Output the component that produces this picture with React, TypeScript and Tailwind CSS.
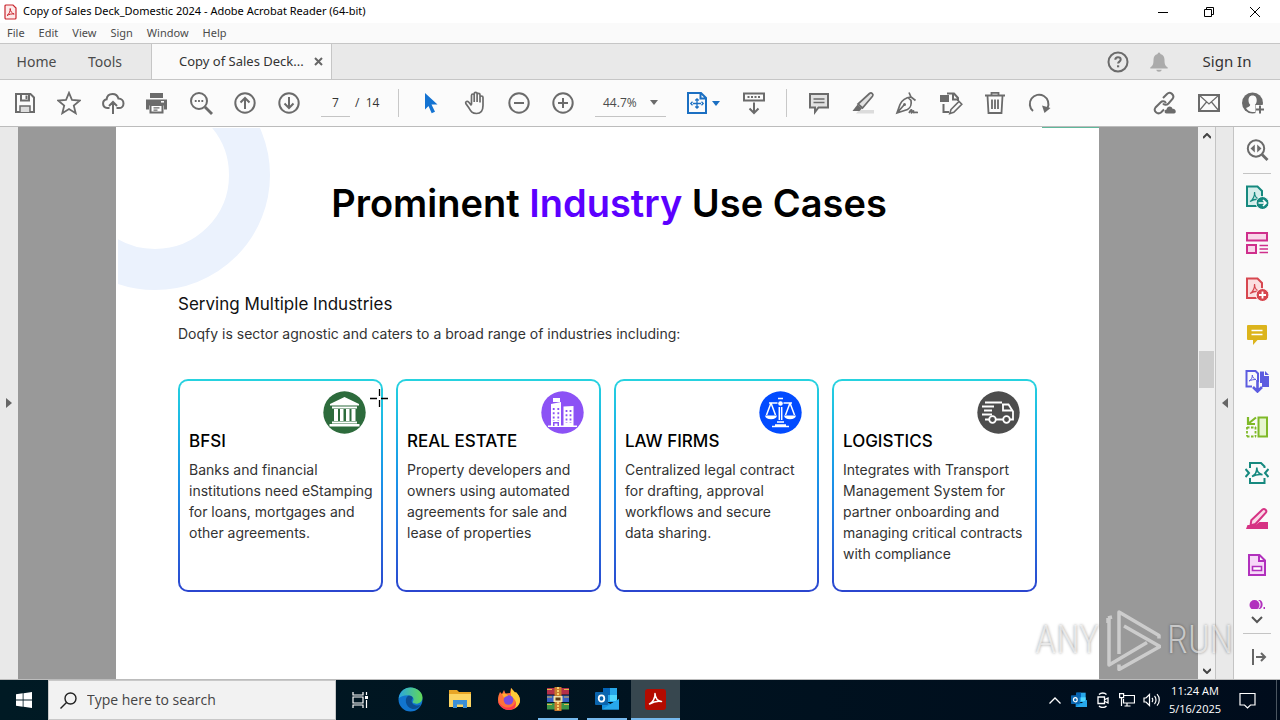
import React from 'react';

type IconProps = { children: React.ReactNode; size?: number; className?: string; sw?: number };

const Icon = ({ children, size = 24, className = 'text-[#6b6b6b]', sw = 2 }: IconProps) => (
  <svg
    width={size}
    height={size}
    viewBox="0 0 24 24"
    fill="none"
    stroke="currentColor"
    strokeWidth={sw}
    className={`shrink-0 ${className}`}
    aria-hidden="true"
  >
    {children}
  </svg>
);

const ToolButton = ({ label, children }: { label: string; children: React.ReactNode }) => (
  <button type="button" aria-label={label} className="flex h-10 w-11 shrink-0 items-center justify-center">
    {children}
  </button>
);

const AcrobatMark = () => <path d="M7 16.5c3-1.500 5-6 4.500-9.500 0 4 2.500 7 5.500 7.500-3-.6-7 .2-10 2z" strokeWidth="1.300" />;

const menus = ['File', 'Edit', 'View', 'Sign', 'Window', 'Help'];

const TitleBar = () => (
  <header className="flex h-[23px] shrink-0 items-center bg-white pr-[2px] pl-1 font-['Noto_Sans',sans-serif] text-[11px] text-black">
    <svg width="13" height="16" viewBox="0 0 13 16" className="mr-[6px]" aria-hidden="true">
      <path d="M1 2a1 1 0 0 1 1-1h7l3 3v10a1 1 0 0 1-1 1H2a1 1 0 0 1-1-1z" fill="#fdeaea" stroke="#c9252d" strokeWidth="1.200" />
      <path d="M3 11.500c1.800-1 3.400-4 3.200-7 .2 3 1.800 5 4 5.500-2.500-.3-5 .2-7.200 1.500z" fill="none" stroke="#c9252d" />
    </svg>
    <h1 className="grow whitespace-nowrap">Copy of Sales Deck_Domestic 2024 - Adobe Acrobat Reader (64-bit)</h1>
    <button type="button" aria-label="Minimize" className="flex w-[46px] justify-center">
      <svg width="10" height="10" stroke="#000"><path d="M0 5.500h10" /></svg>
    </button>
    <button type="button" aria-label="Restore" className="flex w-[46px] justify-center">
      <svg width="10" height="10" fill="none" stroke="#000"><path d="M.5 2.500h7v7h-7zM2.500 2V.5h7v7H8" /></svg>
    </button>
    <button type="button" aria-label="Close" className="flex w-[46px] justify-center">
      <svg width="10" height="10" stroke="#000"><path d="M0 0l10 10M10 0L0 10" /></svg>
    </button>
  </header>
);

const TabBar = () => (
  <div className="flex h-9 shrink-0 items-stretch border-b border-[#c6c6c6] bg-[#e9e9e9] font-['Noto_Sans',sans-serif] text-sm text-[#4b4b4b]">
    <button type="button" className="w-[73px]">Home</button>
    <button type="button" className="w-16">Tools</button>
    <div className="ml-[14px] flex w-[181px] items-center border-x border-[#c6c6c6] bg-[#fafafa] pl-[27px] text-[13px] text-[#333]">
      <span className="grow whitespace-nowrap">Copy of Sales Deck...</span>
      <button type="button" aria-label="Close tab" className="mr-2">
        <svg width="9" height="9" stroke="#666" strokeWidth="2"><path d="M1 1l7 7M8 1L1 8" /></svg>
      </button>
    </div>
    <div className="grow" />
    <button type="button" aria-label="Help" className="px-[10px]">
      <Icon>
        <circle cx="12" cy="12" r="9.500" />
        <path d="M9.300 9.800c0-3.400 5.400-3.200 5.400-.2 0 2-2.600 2-2.600 4" />
        <path d="M11 15.300h2.200v2H11z" fill="currentColor" stroke="none" />
      </Icon>
    </button>
    <button type="button" aria-label="Notifications" className="px-2">
      <Icon className="text-[#ababab]" size={22}>
        <path d="M12 1.500c1 0 1.500.8 1.500 1.800 3 .8 4.500 3.200 4.500 6.200 0 5 .8 6.500 3.500 8.500v1h-19v-1C5.200 16 6 14.500 6 9.500c0-3 1.500-5.400 4.500-6.200 0-1 .5-1.800 1.500-1.800zM9 20.500h6c-.3 1.500-1.300 2-3 2s-2.700-.5-3-2z" fill="currentColor" stroke="none" />
      </Icon>
    </button>
    <button type="button" className="w-[102px] pr-1 text-[15px] text-[#333]">Sign In</button>
  </div>
);

const Caret = ({ className }: { className: string }) => (
  <svg width="8" height="5" className={className} fill="currentColor" aria-hidden="true"><path d="M0 0h8L4 5z" /></svg>
);

const Toolbar = () => (
  <div className="flex h-[47px] shrink-0 items-center border-b border-[#bcbcbc] bg-[#fbfbfb] pl-[3px] text-xs text-[#333]">
    <ToolButton label="Save">
      <Icon>
        <path d="M3 3h14.500L21 6.500V21H3z" />
        <path d="M8 3v6.500h8V3" />
        <path d="M12.500 4.500h2V8h-2z" fill="currentColor" stroke="none" />
        <path d="M7 21v-6h10v6" fill="#ddd" strokeWidth="1.500" />
      </Icon>
    </ToolButton>
    <ToolButton label="Favorite">
      <Icon sw={1.8}><path d="M12 1.800l3 7.200 7.700.6-5.900 5 1.900 7.600L12 18l-6.700 4.200 1.900-7.600-5.900-5L9 9z" /></Icon>
    </ToolButton>
    <ToolButton label="Upload">
      <Icon>
        <path d="M8.500 17H6.200a4.400 4.400 0 0 1-.6-8.700C6 5 8.500 3 11.500 3c3 0 5.200 1.800 5.900 4.600 3 .2 5.100 2.200 5.100 4.800S20.500 17 18 17h-2.500M12 23V11.500M8 15l4-4 4 4" />
      </Icon>
    </ToolButton>
    <ToolButton label="Print">
      <Icon>
        <path d="M5 2h13v5H5z" fill="currentColor" stroke="none" />
        <path d="M1 8.500h21v10h-3v-4H4v4H1z" fill="currentColor" stroke="none" />
        <path d="M5.500 14h12v7.500h-12z" fill="#fff" />
        <path d="M8.500 16.800h6M8.500 19.200h4" strokeWidth="1.200" />
        <path d="M16 10.800h3" stroke="#fff" strokeWidth="1.500" />
      </Icon>
    </ToolButton>
    <ToolButton label="Find">
      <Icon>
        <circle cx="10" cy="10" r="8" />
        <path d="M16 16l7 7" strokeWidth="2.800" />
        <path d="M5.800 10h1.800M9.100 10h1.800M12.400 10h1.800" />
      </Icon>
    </ToolButton>
    <ToolButton label="Previous page">
      <Icon><circle cx="12" cy="12" r="9.700" /><path d="M12 18V7M7.500 11.500L12 7l4.500 4.500" /></Icon>
    </ToolButton>
    <ToolButton label="Next page">
      <Icon><circle cx="12" cy="12" r="9.700" /><path d="M12 6v11M7.500 12.500L12 17l4.500-4.500" /></Icon>
    </ToolButton>
    <input
      aria-label="Page number"
      defaultValue="7"
      className="ml-[10px] h-[27px] w-[29px] border-b border-[#c4c4c4] bg-transparent text-center outline-none"
    />
    <span className="ml-[5px] w-[43px] whitespace-nowrap">/&nbsp; 14</span>
    <div className="mr-[10px] h-7 w-px bg-[#c8c8c8]" />
    <ToolButton label="Select">
      <Icon className="text-[#1473d2]"><path d="M6 2l12.500 11.500h-6l3.500 7.300-3.300 1.500-3.200-7.300L6 18.500z" fill="currentColor" stroke="none" /></Icon>
    </ToolButton>
    <ToolButton label="Pan">
      <Icon sw={1.7}>
        <path d="M7.500 13.500v-9c0-2 2.700-2 2.700 0V11 2.800c0-2 2.900-2 2.900 0V11 3.800c0-2 2.900-2 2.900 0V11.500 6.500c0-2 3-2 3 0v8c0 5-2.500 8-6.500 8-4.500 0-5.500-2-7.500-5.500l-3.200-4.500c-.8-2 1.600-2.700 2.800-1.500l2.900 3.500" transform="translate(1 0)" />
      </Icon>
    </ToolButton>
    <ToolButton label="Zoom out">
      <Icon><circle cx="12" cy="12" r="9.700" /><path d="M7 12h10" /></Icon>
    </ToolButton>
    <ToolButton label="Zoom in">
      <Icon><circle cx="12" cy="12" r="9.700" /><path d="M7 12h10M12 7v10" /></Icon>
    </ToolButton>
    <button type="button" aria-label="Zoom level" className="ml-[10px] flex h-[27px] w-[71px] items-center justify-between border-b border-[#c4c4c4] px-2 text-[#4b4b4b]">
      44.7%
      <Caret className="text-[#6b6b6b]" />
    </button>
    <button type="button" aria-label="Fit page" className="ml-[19px] flex h-10 w-[37px] items-center gap-[3px] text-[#1b6fc2]">
      <Icon className="text-[#1b6fc2]">
        <path d="M3 2h13l5 5v15H3zM15.500 2v5.500H21" />
        <path d="M12 8.500v8M8 12.500h8M10.300 9.500L12 7.800l1.700 1.700M10.300 15.500l1.700 1.700 1.700-1.700M7.500 10.800l-1.700 1.700 1.700 1.700M16.500 10.800l1.700 1.700-1.700 1.700" strokeWidth="1.300" />
      </Icon>
      <Caret className="shrink-0" />
    </button>
    <div className="w-[10px]" />
    <ToolButton label="Page display">
      <Icon>
        <path d="M2 2.500h20v7H2z" />
        <path d="M5.500 6h13" strokeDasharray="2 1.500" />
        <path d="M12 11.500v10M7.500 17.500L12 22l4.500-4.500" />
      </Icon>
    </ToolButton>
    <div className="mr-[10px] ml-[10px] h-7 w-px bg-[#c8c8c8]" />
    <ToolButton label="Comment">
      <Icon>
        <path d="M3 3h18v13.500h-9.500L8 21v-4.500H3z" fill="#e2e2e2" />
        <path d="M6.500 8h11M6.500 11.500h11" strokeWidth="1.500" />
      </Icon>
    </ToolButton>
    <ToolButton label="Highlight">
      <Icon>
        <path d="M8 19h15v3.500H5z" fill="#dcdcdc" stroke="none" />
        <path d="M18.500 2.500c2-1.500 4.500.8 3 2.800L11.500 17 7 13z" fill="#e2e2e2" strokeWidth="1.700" />
        <path d="M6.500 13.500l4.500 4-2.500 2.500H1.500z" fill="currentColor" stroke="none" />
      </Icon>
    </ToolButton>
    <ToolButton label="Sign">
      <Icon sw={1.700}>
        <path d="M14 1.500l2 4.500 4.500 3.500M16 6c-5 .5-9 3-11 7.500L2 22l10.500-3.500c3.500-2 4-6.500 3.500-9L13 6.500M2 22l7-8" />
        <circle cx="9.500" cy="13.500" r="1.500" fill="currentColor" stroke="none" />
        <path d="M14 22c2-4 3-4 2.500-1s1.500-2 2-1-.5 2 1 1.500 1.500 0 3.500 0" />
      </Icon>
    </ToolButton>
    <ToolButton label="Organize">
      <Icon>
        <path d="M1 4h9v7H1z" fill="currentColor" stroke="none" />
        <path d="M8 2.500h7L19 7v3M14 2.500v6h5M4.500 13v8H10" />
        <path d="M12 18.500l8-8 2.800 2.800-8 8-4 1.200z" strokeWidth="1.600" />
      </Icon>
    </ToolButton>
    <ToolButton label="Delete">
      <Icon><path d="M2 4.500h20M8.500 4V1.800h7V4M4.500 5l1 17h13l1-17M9 8.500V18M12 8.500V18M15 8.500V18" strokeWidth="1.800" /></Icon>
    </ToolButton>
    <ToolButton label="Rotate">
      <Icon><path d="M6 20A9.300 9.300 0 1 1 20.500 17" /><path d="M15 14.500l8.500 2.500-6 5z" fill="currentColor" stroke="none" /></Icon>
    </ToolButton>
    <div className="grow" />
    <ToolButton label="Share link">
      <Icon>
        <path d="M10 7l4-4c3-3 8.300 1 5.500 5l-4 4.500c-2 2-4.500 1.500-5.500 0M13 12c-1.500-2.200-4-2-5.500-.5l-5 5c-2.500 3.500 2 7.500 5.500 5l3-3" />
        <path d="M13.500 22.500c-2.500 0-2.500-3.500 0-4 .5-3.500 5-4 6-.8 3.500-.5 4.500 4.500 1.500 4.800z" fill="currentColor" stroke="none" />
      </Icon>
    </ToolButton>
    <ToolButton label="Email">
      <Icon><path d="M2 4h20v16H2z" /><path d="M2 4l10 9 10-9M2 20l7.500-9M22 20l-7.500-9" strokeWidth="1.200" /></Icon>
    </ToolButton>
    <div className="pr-[5px]">
      <ToolButton label="Add people">
        <Icon>
          <circle cx="11.500" cy="12" r="10.500" fill="currentColor" stroke="none" />
          <path d="M11.500 4.500c-3 0-4 2.300-4 4.700 0 2 .8 3.500 1.700 4.500 0 1.500-1.500 2-4.200 3.300 1.500 2.800 4 4 6.500 4h2.500v-7.300c1-1 1.700-2.500 1.700-4.500 0-2.400-1-4.700-4.200-4.700z" fill="#fbfbfb" stroke="none" />
          <path d="M14.500 14h10v10h-10z" fill="#fbfbfb" stroke="none" />
          <path d="M19 14.500v8M15 18.500h8" />
        </Icon>
      </ToolButton>
    </div>
  </div>
);

const BankIcon = () => (
  <svg width="43" height="43" viewBox="0 0 43 43" fill="#fff" aria-hidden="true">
    <circle cx="21.500" cy="21.500" r="21.200" fill="#2d6b3c" />
    <path d="M21.500 6L36 13v1.500H7V13zM9 15.500h25v2H9zM11 18h4v12h-4zM17 18h3.500v12H17zM23 18h3.500v12H23zM28.500 18h4v12h-4zM9 30.500h25v2H9zM6.500 33h30v2.500h-30z" />
  </svg>
);

const BuildingIcon = () => (
  <svg width="43" height="43" viewBox="0 0 43 43" fill="#fff" aria-hidden="true">
    <circle cx="21.500" cy="21.500" r="21.200" fill="#8c52f5" />
    <path d="M12 7h7v4h-7zM10 13l10-2V35H10zM22.500 15.500l10-.5v20h-10zM7 34.500h29V36H7z" />
    <path d="M12.700 17v13M17.300 17v13M25.500 19v13M29.500 19v13" stroke="#8c52f5" strokeWidth="1.800" strokeDasharray="2 2.200" />
    <path d="M12 31h6v4h-1.500v-2.500h-3V35H12z" fill="#8c52f5" />
  </svg>
);

const ScalesIcon = () => (
  <svg width="43" height="43" viewBox="0 0 43 43" fill="none" stroke="#fff" strokeWidth="1.500" aria-hidden="true">
    <circle cx="21.500" cy="21.500" r="21.200" fill="#024bff" stroke="none" />
    <path d="M19 7.500h5M10 12h8.500M24.500 12H33M20.300 16v13M22.700 16v13M18 31h7M13 35.500h17M16 34h11" />
    <circle cx="21.500" cy="12.500" r="2.300" fill="#fff" stroke="none" />
    <path d="M12 12L7.500 24M12 12l4.500 12M31 12l-4.500 12M31 12l4.500 12" />
    <path d="M6 24.500h12c-.5 2.500-2.500 3.800-6 3.800s-5.500-1.300-6-3.800zM25 24.500h12c-.5 2.500-2.500 3.800-6 3.800s-5.500-1.300-6-3.800z" fill="#fff" stroke="none" />
  </svg>
);

const TruckIcon = () => (
  <svg width="43" height="43" viewBox="0 0 43 43" fill="none" stroke="#fff" strokeWidth="1.800" aria-hidden="true">
    <circle cx="21.500" cy="21.500" r="21.200" fill="#4d4d4d" stroke="none" />
    <path d="M8 11.500h17M25 13.500h6.500l4.500 7v8h-3M26 28.500h-7M26 13v6.500h9M5 15.500h12M7 19.500h8M5 23.500h10M8 28.500h4" />
    <circle cx="15.500" cy="28.500" r="3.300" />
    <circle cx="29.500" cy="28.500" r="3.300" />
  </svg>
);

const industries = [
  { title: 'BFSI', icon: <BankIcon />, lines: ['Banks and financial', 'institutions need eStamping', 'for loans, mortgages and', 'other agreements.'] },
  { title: 'REAL ESTATE', icon: <BuildingIcon />, lines: ['Property developers and', 'owners using automated', 'agreements for sale and', 'lease of properties'] },
  { title: 'LAW FIRMS', icon: <ScalesIcon />, lines: ['Centralized legal contract', 'for drafting, approval', 'workflows and secure', 'data sharing.'] },
  { title: 'LOGISTICS', icon: <TruckIcon />, lines: ['Integrates with Transport', 'Management System for', 'partner onboarding and', 'managing critical contracts', 'with compliance'] },
];

const Slide = () => (
  <main className="relative grow overflow-hidden bg-white px-[62px] pt-[51px] font-[Inter,sans-serif]">
    <svg width="156" height="164" className="absolute top-px left-[2px]" aria-hidden="true">
      <circle cx="37" cy="47" r="94.500" fill="none" stroke="#ebf2fd" strokeWidth="41" />
    </svg>
    <div className="absolute top-0 right-0 h-px w-[57px] bg-[#5fb89b]" />
    <h2 className="relative pl-[3px] text-center text-[38px] leading-[50px] font-semibold whitespace-nowrap text-black">
      Prominent <span className="text-[#5b00ff]">Industry</span> Use Cases
    </h2>
    <h3 className="relative mt-16 text-[17px] leading-6 text-[#111]">Serving Multiple Industries</h3>
    <p className="mt-2 text-sm leading-5 text-[#333]">
      Doqfy is sector agnostic and caters to a broad range of industries including:
    </p>
    <div className="mt-[35px] grid grid-cols-4 gap-[13px]">
      {industries.map(({ title, icon, lines }) => (
        <section key={title} className="rounded-[10px] bg-linear-to-b from-[#27d3df] via-[#1b8fe8] to-[#2b45cf] p-[2px]">
          <div className="h-[209px] rounded-lg bg-white pl-[9px]">
            <div className="flex justify-end pt-[10px] pr-[15px]">{icon}</div>
            <h4 className="-mt-[3px] text-[17px] leading-5 font-medium whitespace-nowrap text-black">{title}</h4>
            <p className="mt-2 text-sm leading-[21px] whitespace-nowrap text-[#333]">
              {lines.map((line) => (
                <span key={line} className="block">{line}</span>
              ))}
            </p>
          </div>
        </section>
      ))}
    </div>
    <svg width="18" height="18" className="absolute top-[262px] left-[254px]" stroke="#000" strokeWidth="1.300" aria-hidden="true">
      <path d="M9.500 0v7M9.500 11v7M0 9.500h7M11 9.500h7" />
    </svg>
  </main>
);

const ScrollBar = () => (
  <div className="flex w-[17px] shrink-0 flex-col bg-[#f0f0f0]">
    <button type="button" aria-label="Scroll up" className="flex h-[18px] items-center justify-center">
      <svg width="8" height="6" fill="none" stroke="#444" strokeWidth="2"><path d="M0 5l4-4 4 4" /></svg>
    </button>
    <div className="flex-[206]" />
    <div className="mx-px h-[37px] bg-[#cdcdcd]" />
    <div className="flex-[274]" />
    <button type="button" aria-label="Scroll down" className="flex h-[17px] items-center justify-center">
      <svg width="8" height="6" fill="none" stroke="#444" strokeWidth="2"><path d="M0 1l4 4 4-4" /></svg>
    </button>
  </div>
);

const panelTools = [
  {
    label: 'Export PDF',
    icon: (
      <Icon className="text-[#16897f]">
        <path d="M2 1.500h10.500L17 6v15H2z" fill="#d5eeeb" />
        <g transform="translate(-2 0)"><AcrobatMark /></g>
        <circle cx="17.500" cy="18" r="6.500" fill="currentColor" stroke="#fff" strokeWidth="1" />
        <path d="M13.500 18h7M18 15l3 3-3 3" stroke="#fff" strokeWidth="1.600" />
      </Icon>
    ),
  },
  {
    label: 'Edit PDF',
    icon: (
      <Icon className="text-[#cf2f8c]">
        <path d="M2 2h20v7.500H2zM2 14h9v8H2z" fill="#f9d6ea" />
        <path d="M14.500 14.500H23M14.500 18H23M14.500 21.500H23" strokeWidth="1.300" />
      </Icon>
    ),
  },
  {
    label: 'Create PDF',
    icon: (
      <Icon className="text-[#d7474f]">
        <path d="M2 1.500h10.500L17 6v15H2z" fill="#fbdfe0" />
        <g transform="translate(-2 0)"><AcrobatMark /></g>
        <circle cx="17.500" cy="18" r="6.500" fill="currentColor" stroke="#fff" strokeWidth="1" />
        <path d="M14 18h7M17.500 14.500v7" stroke="#fff" strokeWidth="1.800" />
      </Icon>
    ),
  },
  {
    label: 'Comment',
    icon: (
      <Icon className="text-[#dcb41c]">
        <path d="M3 2h18a1 1 0 0 1 1 1v13a1 1 0 0 1-1 1h-8.500L8 22v-5H3a1 1 0 0 1-1-1V3a1 1 0 0 1 1-1z" fill="currentColor" stroke="none" />
        <path d="M6.500 7.500h11M6.500 11.500h11" stroke="#fff" strokeWidth="1.700" />
      </Icon>
    ),
  },
  {
    label: 'Combine Files',
    icon: (
      <Icon className="text-[#5c5ce0]">
        <path d="M7 17.500H1.500V2h9L13 4.500V13" />
        <path d="M4 12c2-1 3.500-3 3.300-6 .2 2.500 1.700 4 3.700 4.500-2.500 0-5 .5-7 1.500z" strokeWidth="1" />
        <path d="M15 2.500h4v4.500h5v11h-7v-4h-2zM20 2l4 4h-4z" fill="currentColor" stroke="none" />
        <path d="M12.500 11v11M8 18l4.500 4.500L17 18" strokeWidth="2.600" />
      </Icon>
    ),
  },
  {
    label: 'Organize Pages',
    icon: (
      <Icon className="text-[#7fb928]">
        <path d="M13.500 2.500H22v19h-8.500z" fill="#e6f5cf" />
        <path d="M2 12.500h9M2 21.500h9M2 12v9.500M10.500 12v9.500" strokeDasharray="2.500 1.500" strokeWidth="1.800" />
        <path d="M3 2v7h7M3.500 8.500L11 2.500" strokeWidth="2.200" />
      </Icon>
    ),
  },
  {
    label: 'Compress PDF',
    icon: (
      <Icon className="text-[#16897f]">
        <path d="M5 7V2h11l3.500 3.500V7M5 17v5h14.500v-5" />
        <path d="M.5 8L4 12 .5 16M23.500 8L20 12l3.500 4" />
        <path d="M7 15.500c3-1.500 5-5 4.800-9 0 4 2.500 6.500 5.700 7.200-3.500-.5-7.500.3-10.500 1.800z" strokeWidth="1.600" />
      </Icon>
    ),
  },
  {
    label: 'Redact',
    icon: (
      <Icon className="text-[#d63384]">
        <path d="M1 22l1.500-4h8l4-3H23v7z" fill="currentColor" stroke="none" />
        <path d="M17.500 2.500c2-1.500 5 1 3.300 3.200L10.500 17l-5 1.500.8-5.200z" fill="#fadbe9" />
      </Icon>
    ),
  },
  {
    label: 'Prepare Form',
    icon: (
      <Icon className="text-[#b130bd]">
        <path d="M4 2h10.500L20 7.500V22H4zM14 2v6h6" fill="#f6d9f8" />
        <path d="M7.500 13.500h9v4h-9z" fill="#fff" strokeWidth="1.600" />
      </Icon>
    ),
  },
];

const ToolsPanel = () => (
  <aside className="flex w-[47px] shrink-0 flex-col items-center border-l border-[#c4c4c4] bg-[#fafafa]">
    <button type="button" aria-label="Search tools" className="flex h-[46px] shrink-0 items-center">
      <Icon>
        <circle cx="11" cy="10.500" r="8.200" />
        <path d="M17 16.500l5.500 5.500" strokeWidth="2.800" />
        <path d="M9.800 6.500v8L5.500 10.500zM12.200 6.500v8l4.300-4z" fill="currentColor" stroke="none" />
      </Icon>
    </button>
    <div className="h-px w-7 shrink-0 bg-[#c4c4c4]" />
    {panelTools.map(({ label, icon }) => (
      <button key={label} type="button" aria-label={label} className="flex h-[46px] shrink-0 items-center">
        {icon}
      </button>
    ))}
    <button type="button" aria-label="More tools" className="flex min-h-0 grow flex-col items-center gap-[7px] pt-3">
      <svg width="17" height="9" viewBox="0 0 17 9" fill="#b130bd" aria-hidden="true">
        <circle cx="5.500" cy="5" r="5" />
        <path d="M9 0c3.500 1 3.500 8 0 9h2c3.500-1 3.500-8 0-9zM14.500 7H16v2h-1.500z" />
      </svg>
      <svg width="12" height="8" fill="none" stroke="#555" strokeWidth="2" aria-hidden="true"><path d="M1 1l5 5 5-5" /></svg>
    </button>
    <div className="h-px w-7 shrink-0 bg-[#c4c4c4]" />
    <button type="button" aria-label="Expand panel" className="flex h-[45px] shrink-0 items-center">
      <svg width="16" height="16" fill="none" stroke="#666" strokeWidth="2" className="ml-1"><path d="M2 0v16M5 8h9M10 4l4 4-4 4" /></svg>
    </button>
  </aside>
);

const Watermark = () => (
  <div className="pointer-events-none absolute right-[47px] bottom-2 flex items-center gap-[6px] font-['Liberation_Sans_Narrow','Roboto_Condensed','Open_Sans',sans-serif] text-[38px] leading-[62px] font-light text-white/60 [text-shadow:0_0_3px_rgba(0,0,0,0.4)]">
    <span>ANY</span>
    <svg width="56" height="62" viewBox="0 0 56 62" fill="none" stroke="#fff" strokeOpacity=".5" strokeWidth="3.500" strokeLinejoin="round" aria-hidden="true">
      <path d="M14 45V3l40 23.500v3M3 14V9M3 9l4-1M4 9v47l38-22.500M19 17l36 20.500-41 23v-5" />
    </svg>
    <span>RUN</span>
  </div>
);

const WindowsTaskButton = ({ label, active, open, children }: { label: string; active?: boolean; open?: boolean; children: React.ReactNode }) => (
  <button
    type="button"
    aria-label={label}
    className={`flex h-10 w-[49px] shrink-0 flex-col items-center justify-end ${active ? 'bg-[#37474f]' : ''}`}
  >
    <span className="flex grow items-center">{children}</span>
    <span className={`h-0.5 ${active ? 'w-full' : 'w-10'} ${active || open ? 'bg-[#76b9ed]' : ''}`} />
  </button>
);

const OutlookIcon = ({ size = 24 }: { size?: number }) => (
  <svg width={size} height={size} viewBox="0 0 24 24" aria-hidden="true">
    <path d="M8 1h14v14H8z" fill="#28a8ea" />
    <path d="M8 1h7v7H8z" fill="#0364b8" />
    <path d="M15 8h7v6h-7z" fill="#50d9ff" />
    <path d="M7 12l8.500 5L24 12v10.500H7z" fill="#1490df" />
    <path d="M7 22.500L24 12v10.500z" fill="#28a8ea" />
    <rect x="0" y="5" width="13" height="13" rx="1" fill="#0a64ad" />
    <ellipse cx="6.500" cy="11.500" rx="2.800" ry="3.200" fill="none" stroke="#fff" strokeWidth="1.800" />
  </svg>
);

const Taskbar = () => (
  <footer className="flex h-10 shrink-0 items-center bg-linear-to-r from-[#001a24] to-[#000c1c] text-white">
    <button type="button" aria-label="Start" className="flex w-12 justify-center">
      <svg width="16" height="16" fill="#fff"><path d="M0 2.300L6.700 1.300v6.300H0zM7.500 1.200L16 0v7.600H7.500zM0 8.400h6.700v6.300L0 13.700zM7.500 8.400H16V16l-8.500-1.200z" /></svg>
    </button>
    <label className="flex h-10 w-[288px] items-center border border-[#c8c8c8] bg-[#f2f2f2] pl-[11px]">
      <svg width="17" height="17" fill="none" stroke="#222" strokeWidth="1.400" className="mr-[10px] shrink-0"><circle cx="10.500" cy="6.500" r="5.500" /><path d="M6.500 10.500L.5 16.500" /></svg>
      <input type="text" aria-label="Search" placeholder="Type here to search" className="w-full bg-transparent text-sm outline-none placeholder:text-[#444]" />
    </label>
    <button type="button" aria-label="Task view" className="mr-[2px] flex w-12 justify-center">
      <svg width="16" height="16" fill="none" stroke="#fff" strokeWidth="1.200"><path d="M1 0v3h10V0M1 5h10v6H1zM1 16v-3h10v3M14.500 0v3M14.500 8v8" /><path d="M13 4h3v3h-3z" fill="#fff" stroke="none" /></svg>
    </button>
    <WindowsTaskButton label="Microsoft Edge">
      <svg width="25" height="25" viewBox="0 0 24 24">
        <defs>
          <linearGradient id="edgeTop" x1="0" x2="1"><stop stopColor="#2aa6e0" /><stop offset="1" stopColor="#62d957" /></linearGradient>
        </defs>
        <circle cx="12" cy="12" r="11.500" fill="#1175cf" />
        <path d="M.6 11C2 3.500 7 .5 12 .5c7 0 11.500 5 11.500 9.500 0 4-3 6-6 6-2.500 0-4-1-3-2.500C16 11 13.500 8 10 8 5 8 2 9.500.6 11z" fill="url(#edgeTop)" />
        <path d="M10 8.500C6 10 6.500 20 14 21c3.500.5 6.500-1.500 8-4-3 1.500-8.500 1-9-3.500 0-2 1.500-2 1-3.500-.5-1.200-2-2-4-1.500z" fill="#0b4d92" />
      </svg>
    </WindowsTaskButton>
    <WindowsTaskButton label="File Explorer">
      <svg width="22" height="20" viewBox="0 0 22 20">
        <path d="M0 1h8l2 2h12v5H0z" fill="#e8a526" /><path d="M0 5h22v13H0z" fill="#fcd462" />
        <path d="M4 19v-8h14v8h-4v-3.500H8V19z" fill="#3c8fd6" />
      </svg>
    </WindowsTaskButton>
    <WindowsTaskButton label="Firefox">
      <svg width="24" height="24" viewBox="0 0 24 24">
        <path d="M3 5l2 2 2-4 1.500 3.500L13 6l1-5 4 4.500c3.500 1.500 5 5 5 8C22.500 19 18 23 12 23S1 18.500 1 13c0-3 .7-5.500 2-8z" fill="#ff7139" />
        <path d="M14 1l4 4.500 1-.5c2.500 2.500 4 5.500 4 8.500 0 3-2 6-5 7.500 2-4 1-9-4-11.500z" fill="#ffcb37" />
        <path d="M1 13c2 6 7 8 11 7.500S19 17 18 13c2 6-1 10-6 10S1 18.500 1 13z" fill="#ff3750" />
        <circle cx="11.500" cy="13" r="4.800" fill="#7b4be0" />
        <path d="M5 7c3-1.500 5 0 6 2-2 0-3.500 1-4 2z" fill="#ffb02e" />
      </svg>
    </WindowsTaskButton>
    <WindowsTaskButton label="WinRAR" open>
      <svg width="24" height="24" viewBox="0 0 24 24">
        <path d="M1 1h22v6.500H1z" fill="#b4304a" /><path d="M1 8.500h22v6.500H1z" fill="#365fc4" /><path d="M1 16h22v6.500H1z" fill="#3a9548" />
        <path d="M1 2.500h5M1 10h5M1 17.500h5M18 2.500h5M18 10h5M18 17.500h5" stroke="#e0b84a" />
        <path d="M8.500 0h7v24h-7z" fill="#c97b2e" /><path d="M12 0v24" stroke="#f4d06a" strokeWidth="2" strokeDasharray="2 1" />
        <path d="M7.500 9h9v6h-9z" fill="#f1dfa8" /><path d="M9.500 10.500h5v3h-5z" fill="#5c3a15" />
      </svg>
    </WindowsTaskButton>
    <WindowsTaskButton label="Outlook" open><OutlookIcon /></WindowsTaskButton>
    <WindowsTaskButton label="Acrobat Reader" active>
      <svg width="21" height="21" viewBox="0 0 21 21">
        <rect width="21" height="21" rx="3" fill="#b30b00" />
        <path d="M4.500 15c3-1.500 6-6 5.500-10.500.3 4.500 3 7.500 6.500 8-4-.7-8.500.5-12 2.500z" fill="none" stroke="#fff" strokeWidth="1.500" strokeLinejoin="round" />
      </svg>
    </WindowsTaskButton>
    <div className="grow" />
    <button type="button" aria-label="Show hidden icons" className="flex w-6 justify-center">
      <svg width="12" height="7" fill="none" stroke="#fff" strokeWidth="1.300"><path d="M.5 6.500L6 1l5.500 5.500" /></svg>
    </button>
    <button type="button" aria-label="Outlook tray" className="flex w-6 justify-center"><OutlookIcon size={16} /></button>
    <button type="button" aria-label="Meet now" className="flex w-6 justify-center">
      <svg width="14" height="16" fill="none" stroke="#fff" strokeWidth="1.300"><path d="M2 5h6.500v6.500H2zM9 7.500L12 6v5L9 9.500M3 2.500C5 .5 8.500.5 10.500 2.500M3 14c2 2 5.500 2 7.500 0" /></svg>
    </button>
    <button type="button" aria-label="Network" className="flex w-6 justify-center">
      <svg width="16" height="14" fill="none" stroke="#fff" strokeWidth="1.200"><path d="M5 2.500h10.500v7.500H4.500V6M8 10v3M5.500 13h6M.6.6h4v4h-4zM2.500 5v8" /></svg>
    </button>
    <button type="button" aria-label="Volume" className="flex w-6 justify-center">
      <svg width="17" height="14" fill="none" stroke="#fff" strokeWidth="1.200"><path d="M1 5h2l3.500-3.500v11L3 9H1zM9 5c1 1 1 3 0 4M11.500 3c2 2 2 6 0 8M14 1.200c3 3 3 8.500 0 11.500" /></svg>
    </button>
    <div className="w-[64px] text-center text-[11px] leading-[18px] whitespace-nowrap">
      <time className="block">11:24 AM</time>
      <time className="block">5/16/2025</time>
    </div>
    <button type="button" aria-label="Action center" className="flex w-10 justify-center">
      <svg width="17" height="17" fill="none" stroke="#fff" strokeWidth="1.200"><path d="M1 1.500h15v11.500h-4.500L8.500 16l-3-3H1z" /></svg>
    </button>
    <div className="ml-[9px] h-full w-1 border-l border-[#4a5560]" />
  </footer>
);

export default function App() {
  return (
    <div className="flex h-screen flex-col overflow-hidden font-['Open_Sans','Noto_Sans',sans-serif]">
      <TitleBar />
      <nav className="flex h-[21px] shrink-0 items-center gap-[14px] border-b border-[#c6c6c6] bg-[#fafafa] pl-[7px] font-['Noto_Sans',sans-serif] text-[11px] text-[#4b4b4b]">
        {menus.map((menu) => (
          <button key={menu} type="button">{menu}</button>
        ))}
      </nav>
      <TabBar />
      <Toolbar />
      <div className="relative flex min-h-0 grow border-b border-[#bcbcbc]">
        <button type="button" aria-label="Show navigation pane" className="flex w-[18px] shrink-0 items-center justify-center bg-[#e9e9e9]">
          <svg width="6" height="10" fill="#666"><path d="M0 0l6 5-6 5z" /></svg>
        </button>
        <div className="flex min-w-0 grow bg-[#999] pr-[99px] pl-[98px]">
          <Slide />
        </div>
        <ScrollBar />
        <button type="button" aria-label="Collapse tools pane" className="flex w-[18px] shrink-0 items-center justify-center border-l border-[#c4c4c4] bg-[#e9e9e9]">
          <svg width="6" height="10" fill="#666"><path d="M6 0L0 5l6 5z" /></svg>
        </button>
        <ToolsPanel />
        <Watermark />
      </div>
      <Taskbar />
    </div>
  );
}
